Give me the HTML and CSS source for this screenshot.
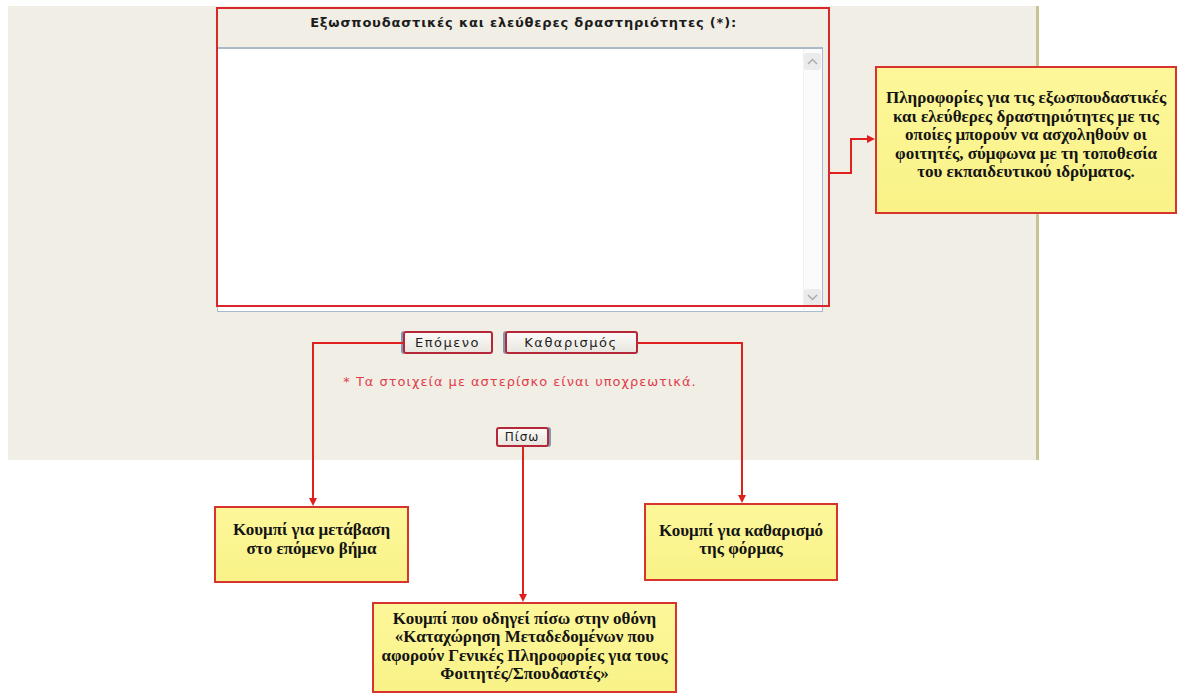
FILE: index.html
```html
<!DOCTYPE html>
<html lang="el">
<head>
<meta charset="utf-8">
<title>Εξωσπουδαστικές δραστηριότητες</title>
<link rel="stylesheet" href="styles.css">
</head>
<body>
<div class="page">
  <div class="panel">
    <div class="field">
      <div class="field-head">Εξωσπουδαστικές και ελεύθερες δραστηριότητες (*):</div>
      <div class="textbox">
        <textarea class="textbox-input" aria-label="Εξωσπουδαστικές και ελεύθερες δραστηριότητες"></textarea>
        <div class="scroll">
          <span class="scroll-btn"><svg width="11" height="7" viewBox="0 0 11 7"><path d="M1 6 L5.5 1.5 L10 6" fill="none" stroke="#a9a9a9" stroke-width="1.4"/></svg></span>
          <span class="scroll-btn"><svg width="11" height="7" viewBox="0 0 11 7"><path d="M1 1 L5.5 5.5 L10 1" fill="none" stroke="#a9a9a9" stroke-width="1.4"/></svg></span>
        </div>
      </div>
    </div>
    <div class="actions">
      <button class="btn btn-next" type="button">Επόμενο</button>
      <button class="btn btn-clear" type="button">Καθαρισμός</button>
    </div>
    <p class="required">* Τα στοιχεία με αστερίσκο είναι υποχρεωτικά.</p>
    <div class="back-row">
      <button class="btn btn-back" type="button">Πίσω</button>
    </div>
  </div>

  <div class="mark mark-field"></div>

  <svg class="connectors" width="1178" height="693" viewBox="0 0 1178 693">
    <g fill="none" stroke="#e0201e" stroke-width="2">
      <polyline points="830,173 851,173 851,139 869,139"/>
      <polyline points="403,343 313,343 313,499"/>
      <polyline points="638,343 742,343 742,496"/>
      <polyline points="523,446 523,595"/>
    </g>
    <g fill="#e0201e">
      <polygon points="875,139 867,135 867,143"/>
      <polygon points="313,506 309,498 317,498"/>
      <polygon points="742,503 738,495 746,495"/>
      <polygon points="523,602 519,594 527,594"/>
    </g>
  </svg>

  <div class="callout callout-info">Πληροφορίες για τις εξωσπουδαστικές<br>και ελεύθερες δραστηριότητες με τις<br>οποίες μπορούν να ασχοληθούν οι<br>φοιτητές, σύμφωνα με τη τοποθεσία<br>του εκπαιδευτικού ιδρύματος.</div>
  <div class="callout callout-next">Κουμπί για μετάβαση<br>στο επόμενο βήμα</div>
  <div class="callout callout-clear">Κουμπί για καθαρισμό<br>της φόρμας</div>
  <div class="callout callout-back">Κουμπί που οδηγεί πίσω στην οθόνη<br>«Καταχώρηση Μεταδεδομένων που<br>αφορούν Γενικές Πληροφορίες για τους<br>Φοιτητές/Σπουδαστές»</div>
</div>
</body>
</html>
```

FILE: styles.css
```css
* { box-sizing: border-box; }

html, body {
  margin: 0;
  padding: 0;
  background: #ffffff;
}

.page {
  position: relative;
  width: 1178px;
  height: 693px;
  overflow: hidden;
  font-family: "DejaVu Sans", Verdana, sans-serif;
}

.panel {
  margin: 6px 0 0 8px;
  width: 1031px;
  height: 454px;
  background: #f1efe5;
  border-right: 3px solid #c6c493;
  display: flex;
  flex-direction: column;
  align-items: center;
}

.field {
  width: 606px;
  margin-top: 1px;
  margin-left: -5px;
}

.field-head {
  height: 40px;
  padding-top: 8px;
  text-align: center;
  font-weight: bold;
  font-size: 13px;
  line-height: 16px;
  letter-spacing: 0.8px;
  color: #1c1c1c;
  padding-left: 8px;
  white-space: nowrap;
}

.textbox {
  display: flex;
  height: 265px;
  background: #ffffff;
  border: 1px solid #a7bbcb;
  border-top: 2px solid #a9b9c6;
}

.textbox-input {
  flex: 1;
  border: none;
  resize: none;
  outline: none;
  background: transparent;
  font-family: "DejaVu Sans", sans-serif;
  font-size: 12px;
}

.scroll {
  width: 19px;
  background: #fbfbfb;
  border-left: 1px solid #f0f0f0;
  display: flex;
  flex-direction: column;
  justify-content: space-between;
  align-items: center;
  padding: 4px 0 5px;
}

.scroll-btn {
  width: 17px;
  height: 17px;
  background: #ebebeb;
  border-radius: 3px;
  display: flex;
  align-items: center;
  justify-content: center;
}

.actions {
  display: flex;
  gap: 12px;
  margin-top: 19px;
  margin-left: -4px;
}

.btn {
  font-family: "DejaVu Sans", Verdana, sans-serif;
  font-size: 13px;
  color: #1e1e1e;
  height: 23px;
  padding: 0;
  background: linear-gradient(#fbfaf8, #e9e6df);
  border: 2px solid #b4283a;
  border-radius: 3px;
  box-shadow: -2px 0 0 #7e9ab3;
  letter-spacing: 1.5px;
}

.btn-next { width: 90px; }
.btn-clear { width: 133px; }

.required {
  margin: 20px 0 0;
  font-size: 13px;
  line-height: 16px;
  color: #e23c4c;
  letter-spacing: 1px;
  margin-left: -4px;
}

.back-row {
  margin-top: 36px;
  margin-left: 0;
}

.btn-back {
  width: 53px;
  height: 20px;
  font-size: 12px;
  letter-spacing: 1px;
  box-shadow: 2px 0 0 #7e9ab3;
}

.mark {
  position: absolute;
  border: 2px solid #d8282c;
  pointer-events: none;
}

.mark-field {
  left: 216px;
  top: 7px;
  width: 614px;
  height: 300px;
}

.connectors {
  position: absolute;
  left: 0;
  top: 0;
  pointer-events: none;
}

.callout {
  position: absolute;
  display: flex;
  align-items: center;
  justify-content: center;
  text-align: center;
  background: linear-gradient(#fdf79a, #f9f288);
  border: 2px solid #d6342c;
  font-family: "Liberation Serif", "Times New Roman", serif;
  font-weight: bold;
  font-size: 17px;
  line-height: 18.5px;
  color: #141414;
  white-space: nowrap;
}

.callout-info {
  left: 875px;
  top: 66px;
  width: 302px;
  height: 148px;
  padding: 0 0 9px;
}

.callout-next {
  left: 214px;
  top: 506px;
  width: 195px;
  height: 77px;
  padding-bottom: 10px;
}

.callout-clear {
  left: 644px;
  top: 503px;
  width: 194px;
  height: 78px;
  padding-bottom: 4px;
}

.callout-back {
  left: 372px;
  top: 602px;
  width: 305px;
  height: 91px;
  padding: 0 0 2px;
}
```
